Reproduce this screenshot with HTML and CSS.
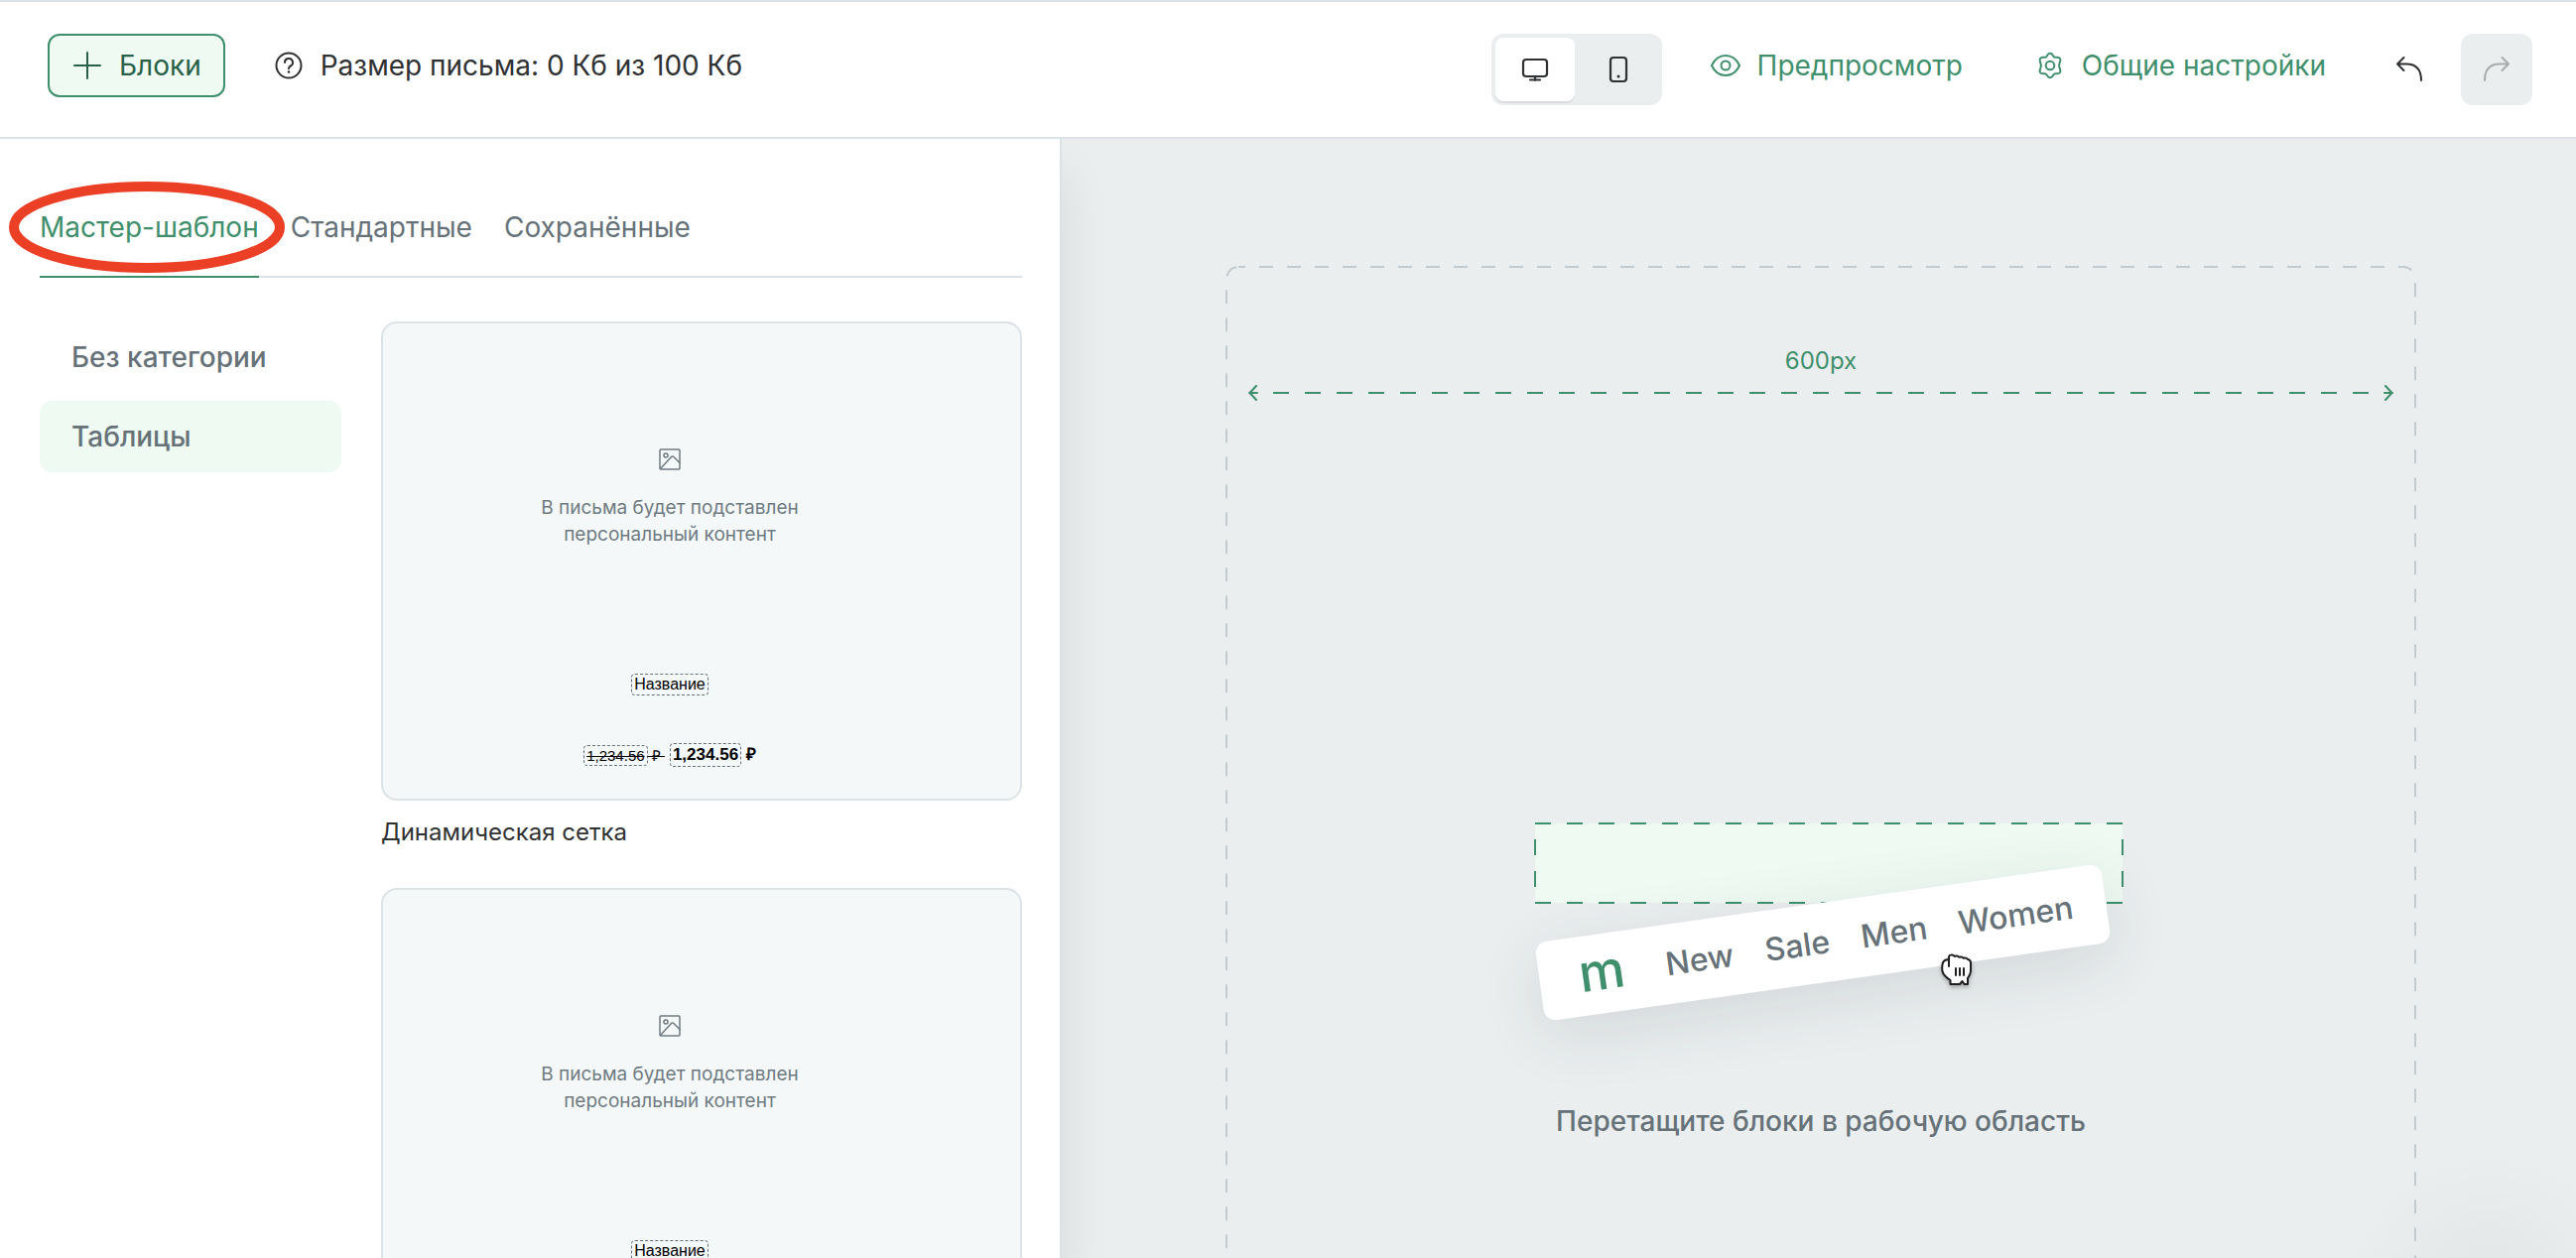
FILE: index.html
```html
<!DOCTYPE html>
<html lang="ru">
<head>
<meta charset="utf-8">
<title>Редактор письма</title>
<link rel="stylesheet" href="styles.css">
</head>
<body>
<header class="topbar">
  <button class="blocks-btn" type="button">
    <svg class="icon" viewBox="0 0 32 32" aria-hidden="true"><path d="M16 3v26M3 16h26"/></svg>
    Блоки
  </button>
  <div class="size-info">
    <svg class="icon" viewBox="0 0 32 32" aria-hidden="true"><circle cx="16" cy="16" r="12.5"/><path d="M12 13a4 4 0 1 1 5.800 3.500c-1.300.7-1.800 1.400-1.800 2.700"/><circle class="dot" cx="16" cy="22.500" r="1.300"/></svg>
    <span>Размер письма: 0 Кб из 100 Кб</span>
  </div>
  <div class="tools">
    <div class="segmented">
      <button class="segment segment-active" type="button" aria-label="Десктоп">
        <svg class="icon icon-bold" viewBox="0 0 32 32" aria-hidden="true"><rect x="4" y="6" width="24" height="17" rx="3"/><path d="M16 23v4M11 26.500h10"/></svg>
      </button>
      <button class="segment" type="button" aria-label="Мобильный">
        <svg class="icon icon-bold" viewBox="0 0 32 32" aria-hidden="true"><rect x="8" y="4" width="16" height="24" rx="3"/><circle class="dot" cx="16" cy="23" r="1.500"/></svg>
      </button>
    </div>
    <div class="links">
      <a class="tool-link" href="#preview">
        <svg class="icon" viewBox="0 0 32 32" aria-hidden="true"><path d="M2 16c3-6.500 8.500-10 14-10s11 3.500 14 10c-3 6.500-8.500 10-14 10S5 22.500 2 16z"/><circle cx="16" cy="16" r="4.500"/></svg>
        Предпросмотр
      </a>
      <a class="tool-link" href="#settings">
        <svg class="icon" viewBox="0 0 32 32" aria-hidden="true"><path d="M13.500 5.300C14.200 4.200 15 3.700 16 3.700s1.800.5 2.500 1.600l.9 1.400c.4.7 1.200 1.100 2 1.100l1.800-.1c1.300 0 2.200.4 2.800 1.300.5.9.5 1.900.1 3l-.6 1.900c-.3.700-.3 3.500 0 4.200l.6 1.900c.4 1.100.4 2.100-.1 3-.6.9-1.500 1.300-2.800 1.300l-1.800-.1c-.8 0-1.600.4-2 1.100l-.9 1.400c-.7 1.100-1.500 1.600-2.500 1.600s-1.800-.5-2.500-1.600l-.9-1.400c-.4-.7-1.200-1.100-2-1.100l-1.800.1c-1.300 0-2.200-.4-2.800-1.300-.5-.9-.5-1.900-.1-3l.6-1.900c.3-.7.3-3.500 0-4.200l-.6-1.900c-.4-1.100-.4-2.100.1-3 .6-.9 1.500-1.300 2.800-1.300l1.800.1c.8 0 1.600-.4 2-1.100z"/><circle cx="16" cy="16" r="4.300"/></svg>
        Общие настройки
      </a>
    </div>
    <div class="history">
      <button class="history-btn" type="button" aria-label="Отменить">
        <svg class="icon" viewBox="0 0 32 32" aria-hidden="true"><path d="M10.500 4 4 10.500l6.500 6.500M4 10.500h9c9 0 15 5 15 16.500"/></svg>
      </button>
      <button class="history-btn" type="button" aria-label="Повторить" disabled>
        <svg class="icon" viewBox="0 0 32 32" aria-hidden="true"><path d="m21.500 4 6.500 6.500-6.500 6.500M28 10.500h-9c-9 0-15 5-15 16.500"/></svg>
      </button>
    </div>
  </div>
</header>

<main class="workspace">
  <aside class="library">
    <nav class="tabs">
      <a class="tab tab-active" href="#master">Мастер-шаблон
        <svg class="marker" viewBox="0 0 278 92" aria-hidden="true"><ellipse cx="139" cy="46" rx="134" ry="41"/></svg>
      </a>
      <a class="tab" href="#standard">Стандартные</a>
      <a class="tab" href="#saved">Сохранённые</a>
    </nav>
    <div class="library-body">
      <nav class="categories">
        <a class="category" href="#none">Без категории</a>
        <a class="category category-active" href="#tables">Таблицы</a>
      </nav>
      <div class="cards">
        <figure class="card">
          <div class="preview">
            <svg class="picture" viewBox="0 0 24 24" aria-hidden="true"><rect x="2" y="2" width="20" height="20" rx="1"/><circle cx="8" cy="8" r="2"/><path d="M2.500 21.500 13.500 9.500q1.200-1.200 2.400 0L22 15.500"/></svg>
            <p class="preview-note">В письма будет подставлен<br>персональный контент</p>
            <div class="preview-name"><span class="field">Название</span></div>
            <div class="prices">
              <s class="price-old"><span class="field">1,234.56</span> ₽ </s>
              <b class="price-new"><span class="field">1,234.56</span> ₽</b>
            </div>
          </div>
          <figcaption>Динамическая сетка</figcaption>
        </figure>
        <figure class="card">
          <div class="preview">
            <svg class="picture" viewBox="0 0 24 24" aria-hidden="true"><rect x="2" y="2" width="20" height="20" rx="1"/><circle cx="8" cy="8" r="2"/><path d="M2.500 21.500 13.500 9.500q1.200-1.200 2.400 0L22 15.500"/></svg>
            <p class="preview-note">В письма будет подставлен<br>персональный контент</p>
            <div class="preview-name"><span class="field">Название</span></div>
          </div>
        </figure>
      </div>
    </div>
  </aside>

  <section class="canvas">
    <div class="frame">
      <svg class="frame-line" aria-hidden="true"><rect x="1" y="1" width="1198" height="1407" rx="12"/></svg>
      <div class="width-label">600px</div>
      <svg class="ruler" viewBox="0 0 1154 16" aria-hidden="true"><path d="M8 1 1.500 8 8 15M1146 1l6.500 7-6.500 7M1 8h8M1145 8h8"/><path class="ruler-dash" d="M25 8h1112"/></svg>
      <div class="drop-demo">
        <svg class="drop-zone" viewBox="0 0 594 82" aria-hidden="true"><rect x="1" y="1" width="592" height="80"/><path d="M1 1h592M1 81h592"/><path stroke-dashoffset="16" d="M1 1v80M593 1v80"/></svg>
        <div class="drag-block">
          <span class="logo">m</span>
          <span>New</span>
          <span>Sale</span>
          <span>Men</span>
          <span>Women</span>
        </div>
        <svg class="hand" viewBox="0 0 32 34" aria-hidden="true"><path d="M8 6V3.500Q8.500 1.500 10 1.500q2.500-.3 4 1.500 2.500-1.500 4.500.8 2.500-1 4.200 1Q25 4 27.200 6q2.300.3 2.800 3v9q-.5 4-3 7v6h-3.500L21.500 28 19 31H9.500v-4Q2.500 22.500 1.500 18q-.8-4 .5-9Q4 6 8 6z"/><path d="M8 6v7M15 15v7M19 15v7M23 15v7"/></svg>
      </div>
      <p class="hint">Перетащите блоки в рабочую область</p>
    </div>
  </section>
</main>
</body>
</html>
```

FILE: styles.css
```css
* {
  box-sizing: border-box;
}

body {
  margin: 0;
  height: 100vh;
  display: flex;
  flex-direction: column;
  overflow: hidden;
  background: #fff;
  color: #2f3133;
  font: 28px/40px Inter, "Liberation Sans", sans-serif;
}

a {
  color: inherit;
  text-decoration: none;
}

button {
  margin: 0;
  padding: 0;
  border: 0;
  background: none;
  color: inherit;
  font: inherit;
}

svg {
  display: block;
  fill: none;
  stroke: currentColor;
  stroke-width: 2;
  stroke-linecap: round;
  stroke-linejoin: round;
}

.icon {
  width: 32px;
  height: 32px;
  flex: none;
}

.icon-bold {
  stroke-width: 2.2;
}

.dot {
  fill: currentColor;
  stroke: none;
}

/* Top bar */
.topbar {
  flex: none;
  display: flex;
  align-items: flex-start;
  height: 140px;
  padding: 32px 44px 0 48px;
  border-top: 2px solid #dce3e6;
  border-bottom: 2px solid #dce3e6;
}

.blocks-btn {
  display: flex;
  align-items: center;
  gap: 16px;
  height: 64px;
  padding: 0 22px;
  border: 2px solid #3f8f6c;
  border-radius: 12px;
  background: #eefaf2;
  color: #2a6048;
}

.size-info {
  display: flex;
  align-items: center;
  gap: 16px;
  height: 64px;
  margin-left: 48px;
}

.tools {
  display: flex;
  align-items: flex-start;
  gap: 48px;
  margin-left: auto;
}

.segmented {
  display: flex;
  gap: 4px;
  padding: 4px;
  border-radius: 12px;
  background: #eaeeef;
}

.segment {
  display: flex;
  align-items: center;
  justify-content: center;
  width: 80px;
  height: 64px;
  border-radius: 8px;
}

.segment-active {
  background: #fff;
  box-shadow: 0 2px 0 #dadcdf;
}

.links {
  display: flex;
  gap: 72px;
  color: #3f8f6c;
}

.tool-link {
  display: flex;
  align-items: center;
  gap: 16px;
  height: 64px;
}

.history {
  display: flex;
  gap: 16px;
}

.history-btn {
  display: flex;
  align-items: center;
  justify-content: center;
  width: 72px;
  height: 72px;
  border-radius: 12px;
}

.history-btn:disabled {
  background: #eaeeef;
  color: #a9abad;
}

.workspace {
  flex: 1;
  display: flex;
  min-height: 0;
  overflow: hidden;
}

/* Block library */
.library {
  position: relative;
  z-index: 1;
  flex: none;
  width: 1070px;
  padding: 56px 38px 0 40px;
  overflow: hidden;
  border-right: 2px solid #dce3e6;
  background: #fff;
  box-shadow: 0 32px 48px rgb(0 0 0 / 9%);
}

.tabs {
  display: flex;
  gap: 32px;
  height: 84px;
  border-bottom: 2px solid #dce3e6;
  color: #667278;
}

.tab {
  position: relative;
  height: 84px;
  padding-top: 13px;
}

.tab-active {
  border-bottom: 2px solid #3f8f6c;
  color: #3f8f6c;
}

.marker {
  position: absolute;
  top: -13px;
  left: -31px;
  width: 278px;
  height: 92px;
  stroke: #eb4025;
  stroke-width: 10;
}

.library-body {
  display: flex;
  gap: 40px;
  padding-top: 44px;
}

.categories {
  display: flex;
  flex-direction: column;
  gap: 8px;
  width: 304px;
  color: #667278;
  font-weight: 500;
}

.category {
  height: 72px;
  padding: 16px 32px;
  border-radius: 12px;
}

.category-active {
  background: #eefaf2;
}

.cards {
  flex: 1;
}

.card {
  margin: 0 0 36px;
}

.preview {
  display: flex;
  flex-direction: column;
  align-items: center;
  height: 483px;
  padding: 125px 64px 0 0;
  border: 2px solid #dce3e6;
  border-radius: 16px;
  background: #f4f8f9;
  color: #000;
  font-family: "Liberation Sans", Arial, sans-serif;
}

.picture {
  width: 24px;
  height: 24px;
  color: #6f7b81;
  stroke-width: 1.5;
}

.preview-note {
  margin: 23px 0 0;
  color: #6f7b81;
  font: 19px/27px Inter, sans-serif;
  text-align: center;
}

.preview-name {
  margin-top: 127px;
  font-size: 16px;
  line-height: 20px;
}

.field {
  display: inline-block;
  padding: 0 2px;
  border: 1px dashed #667278;
  border-radius: 4px;
}

.prices {
  display: flex;
  align-items: center;
  gap: 5px;
  margin-top: 48px;
  white-space: pre;
}

.price-old {
  font-size: 15px;
  line-height: 19px;
}

.price-old .field {
  text-decoration: line-through;
}

.price-new {
  font-size: 17px;
  line-height: 22px;
}

figcaption {
  height: 52px;
  padding-top: 16px;
  font-size: 24px;
  line-height: 32px;
}

/* Canvas */
.canvas {
  flex: 1;
  display: flex;
  justify-content: center;
  min-width: 0;
  padding: 128px 0 0 4px;
  overflow: hidden;
  background:
    radial-gradient(circle at calc(100% - 88px) calc(100% + 40px), rgb(0 0 0 / 4%), rgb(0 0 0 / 1%) 100px, transparent 150px),
    #eaeeef;
}

.frame {
  position: relative;
  display: flex;
  flex-direction: column;
  align-items: center;
  flex: none;
  width: 1200px;
  color: #667278;
}

.frame-line {
  position: absolute;
  inset: 0;
  width: 100%;
  height: 100%;
  color: #c0cbd2;
  stroke-dasharray: 14 14;
  stroke-dashoffset: 7;
  stroke-linecap: butt;
}

.width-label {
  margin-top: 80px;
  color: #3f8f6c;
  font-size: 24px;
  line-height: 32px;
}

.ruler {
  width: 1154px;
  height: 16px;
  margin-top: 8px;
  color: #3f8f6c;
}

.ruler-dash {
  stroke-dasharray: 16;
  stroke-linecap: butt;
}

.drop-demo {
  position: relative;
  width: 594px;
  height: 250px;
  margin: 425px 0 0 16px;
}

.drop-zone {
  width: 594px;
  height: 82px;
  color: #3f8f6c;
  stroke-dasharray: 16;
  stroke-linecap: butt;
}

.drop-zone rect {
  fill: #eefaf2;
  stroke: none;
}

.drag-block {
  position: absolute;
  top: 81px;
  left: 3px;
  display: flex;
  align-items: center;
  gap: 32px;
  width: 576px;
  height: 80px;
  padding-left: 40px;
  border-radius: 12px;
  background: #fff;
  box-shadow: 0 16px 64px rgb(40 50 60 / 12%);
  font-size: 32px;
  font-weight: 500;
  transform: rotate(-8deg);
}

.logo {
  padding: 0 10px 4px 0;
  color: #3f8f6c;
  font-size: 52px;
}

.hand {
  position: absolute;
  top: 132px;
  left: 410px;
  width: 32px;
  height: 34px;
  color: #1f1f1f;
  fill: #fff;
  filter: drop-shadow(0 2px 2px rgb(0 0 0 / 30%));
}

.hint {
  margin: 31px 0 0;
  font-weight: 500;
}
```
